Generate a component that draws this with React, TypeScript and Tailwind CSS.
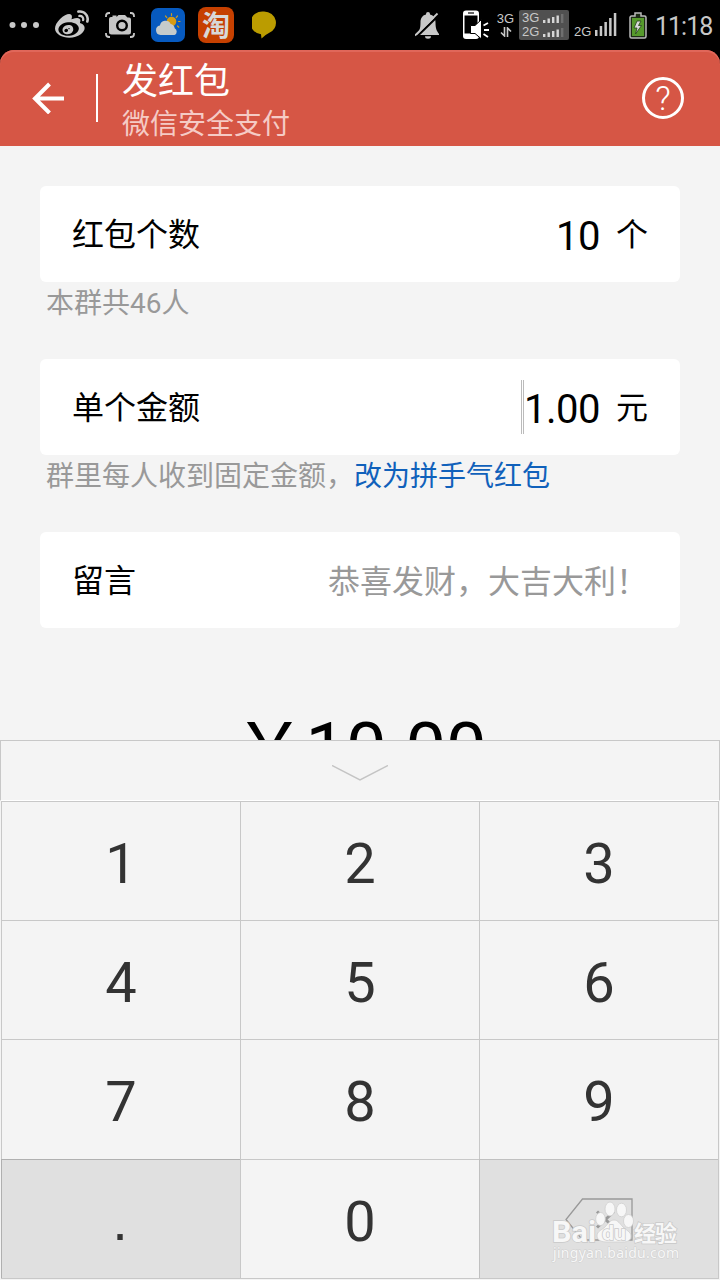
import { useState } from 'react'
import type { ReactNode } from 'react'
import { FaWeibo } from 'react-icons/fa'

interface FieldRowProps {
    label: string
    children: ReactNode
}

interface KeyProps {
    label: string
    onPress: (key: string) => void
}

const digitKeys = ['1', '2', '3', '4', '5', '6', '7', '8', '9']

function SignalBars() {
    return (
        <svg className="w-[21px] h-[9px]" viewBox="0 0 21 9" fill="#d6d6d6">
            <rect x="0" y="6" width="2.4" height="3" />
            <rect x="4.5" y="4.5" width="2.4" height="4.5" />
            <rect x="9" y="3" width="2.4" height="6" />
            <rect x="13.5" y="1.5" width="2.4" height="7.5" />
            <rect x="18" y="0" width="2.4" height="9" fill="#6f6f6f" />
        </svg>
    )
}

function CameraIcon() {
    return (
        <svg className="w-[30px] h-[26px]" viewBox="0 0 30 26" fill="none">
            <path d="M1 5V4a3 3 0 0 1 3-3h1M25 1h1a3 3 0 0 1 3 3v1M1 21v1a3 3 0 0 0 3 3h1M25 25h1a3 3 0 0 0 3-3v-1" stroke="#c6c6c6" strokeWidth="1.8" />
            <path d="M6 5h1.500V3.500h4V5l2-2h6.500l2.500 2.500H24a2 2 0 0 1 2 2V20a2.500 2.500 0 0 1-2.500 2.500h-17A2.500 2.500 0 0 1 4 20V7a2 2 0 0 1 2-2Z" fill="#c6c6c6" />
            <circle cx="17" cy="13.500" r="4.800" stroke="#000" strokeWidth="2.400" />
        </svg>
    )
}

function WeatherIcon() {
    return (
        <svg className="w-[34px] h-[34px]" viewBox="0 0 34 34">
            <rect width="34" height="34" rx="7" fill="#075abf" />
            <g stroke="#c99a22" strokeWidth="1.200" strokeLinecap="round">
                <path d="M20.500 5.500v2M14.500 8l1.300 1.600M26.500 8l-1.300 1.600M27.500 13.500h1.500M26.500 18l1.300 1.200" />
            </g>
            <circle cx="20.500" cy="13.500" r="4.800" fill="#d79b13" />
            <path d="M9.500 27a4.800 4.800 0 0 1-.6-9.500 5.700 5.700 0 0 1 10.800-1.500 5 5 0 0 1 4 4.300A3.700 3.700 0 0 1 23.500 27Z" fill="#c5cbcb" />
        </svg>
    )
}

function MutedBellIcon() {
    return (
        <svg className="w-6 h-[27px]" viewBox="0 0 24 27">
            <path d="M13 0a2 2 0 0 1 2 2v.5c4 1 5.500 4 5.500 8 0 6 1 8 3.500 11.500v1H1.500v-1c3-3 4-5.500 4-11.500 0-4 1.500-7 5.500-8V2a2 2 0 0 1 2-2Z" fill="#c8c8c8" />
            <path d="M10 24.300h6a3 2.500 0 0 1-6 0Z" fill="#c8c8c8" />
            <path d="M1.500 25 24 3" stroke="#000" strokeWidth="2.200" />
            <path d="M0 23.500 22.500 1.500" stroke="#c8c8c8" strokeWidth="1.800" />
        </svg>
    )
}

function PhoneSoundIcon() {
    return (
        <svg className="w-[28px] h-[30px]" viewBox="0 0 28 30">
            <rect x="1" y=".5" width="16" height="28.500" rx="3" fill="#fff" />
            <path d="M2.500 5.500h13v18h-13Z" fill="#000" />
            <path d="M6 3h6" stroke="#000" strokeWidth="1.200" />
            <path d="M8.500 15.500H13l6.500-6v19.500L13 23.500H8.500Z" fill="#fff" stroke="#000" strokeWidth="1" />
            <path d="m21.500 15.500 4.500-2.500M22 20h5M21.500 24l4.500 3" stroke="#fff" strokeWidth="1.800" />
        </svg>
    )
}

function BatteryIcon() {
    return (
        <svg className="w-[18px] h-[27px]" viewBox="0 0 18 27">
            <path d="M6 1h6v3h3.500A1.500 1.500 0 0 1 17 5.500v19a1.500 1.500 0 0 1-1.500 1.500h-13A1.500 1.500 0 0 1 1 24.500v-19A1.500 1.500 0 0 1 2.500 4H6Z" fill="#1d2b16" stroke="#b9b9b9" strokeWidth="1.500" />
            <path d="M3 6h12v18H3Z" fill="#569a2c" />
            <path d="m8 9-3 7h3l-1.500 6 6-8.500H9.500L12 9Z" fill="#d9d9d9" stroke="#24401a" strokeWidth=".8" />
        </svg>
    )
}

function StatusBar() {
    return (
        <div className="flex h-[50px] shrink-0 items-center bg-black text-[#c8c8c8]">
            <svg className="ml-[9px] w-[31px] h-2" viewBox="0 0 31 8" fill="#c8c8c8">
                <circle cx="3.500" cy="4" r="3" />
                <circle cx="15" cy="4" r="3" />
                <circle cx="27" cy="4" r="3" />
            </svg>
            <FaWeibo className="ml-[14px] w-[36px] h-[34px]" />
            <div className="ml-[15px]"><CameraIcon /></div>
            <div className="ml-4"><WeatherIcon /></div>
            <div className="ml-[13px] flex size-9 items-center justify-center rounded-[8px] bg-[#c64000] pt-[3px] text-[28px] leading-none font-bold text-[#d8d8d8]">
                淘
            </div>
            <svg className="ml-[18px] w-6 h-[28px]" viewBox="0 0 24 28">
                <path d="M12 .5a11.800 11.300 0 0 1 4.500 21.800Q13 24 9.500 27.500L9 23.300A11.800 11.300 0 0 1 12 .5Z" fill="#bb9c00" />
            </svg>

            <div className="ml-auto flex items-center">
                <MutedBellIcon />
                <div className="ml-[23px]"><PhoneSoundIcon /></div>
                <div className="ml-[6px] flex w-[19px] flex-col items-center font-['Liberation_Sans',sans-serif]">
                    <span className="text-[13px] leading-[12px]">3G</span>
                    <svg className="mt-[2px] w-[12px] h-[10px]" viewBox="0 0 12 10" fill="none" stroke="#c8c8c8" strokeWidth="1.600">
                        <path d="M4.500 0v9L1 5.500M7.500 10V1L11 4.500" />
                    </svg>
                </div>
                <div className="ml-[4px] flex h-[30px] w-[50px] flex-col justify-center gap-[2px] rounded-[2px] bg-[#505050] pl-[3px] font-['Liberation_Sans',sans-serif]">
                    <div className="flex items-center gap-[3px]">
                        <span className="w-[18px] text-[13px] leading-[12px]">3G</span>
                        <SignalBars />
                    </div>
                    <div className="flex items-center gap-[3px]">
                        <span className="w-[18px] text-[13px] leading-[12px]">2G</span>
                        <SignalBars />
                    </div>
                </div>
                <div className="ml-[5px] flex items-end font-['Liberation_Sans',sans-serif]">
                    <span className="w-[19px] text-[13px] leading-[11px]">2G</span>
                    <svg className="ml-[2px] w-[22px] h-6" viewBox="0 0 22 24" fill="#c8c8c8">
                        <rect x="0" y="17" width="2.500" height="6" />
                        <rect x="4.700" y="13" width="2.500" height="10" />
                        <rect x="9.400" y="9" width="2.500" height="14" />
                        <rect x="14.100" y="5" width="2.500" height="18" />
                        <rect x="18.800" y="0" width="2.500" height="23" />
                    </svg>
                </div>
                <div className="ml-3"><BatteryIcon /></div>
                <span className="ml-2 w-[65px] pt-[2px] text-[25px] leading-none tracking-[-1px]">11:18</span>
            </div>
        </div>
    )
}

function Header() {
    return (
        <div className="shrink-0 bg-black">
            <header className="flex h-24 items-center rounded-t-[14px] bg-[#d65645] text-white shadow-[inset_0_2px_0_#e0675a]">
                <svg className="ml-8 w-8 h-8" viewBox="0 0 32 32" fill="none" stroke="currentColor" strokeWidth="4">
                    <path d="M32 16.500H3M17.500 2 3 16.500l14.500 14.500" />
                </svg>
                <div className="ml-8 h-12 w-[2px] bg-white" />
                <div className="ml-6 flex flex-col pt-[9px]">
                    <h1 className="text-[36px] leading-[43px]">发红包</h1>
                    <p className="text-[28px] leading-[41px] text-[#f5cbc5]">微信安全支付</p>
                </div>
                <div className="mr-9 ml-auto flex size-[42px] items-center justify-center rounded-full border-[3px] border-white text-[34px] leading-none font-light">
                    ?
                </div>
            </header>
        </div>
    )
}

function FieldRow({ label, children }: FieldRowProps) {
    return (
        <div className="flex h-24 items-center justify-between rounded-md bg-white px-8 pt-[2px] text-[32px] text-black">
            <span>{label}</span>
            {children}
        </div>
    )
}

function Key({ label, onPress }: KeyProps) {
    return (
        <button
            type="button"
            onClick={() => onPress(label)}
            className="flex items-center justify-center border-t border-l border-[#c8c8c8] pt-[5px] text-[56px] leading-none text-[#333333]"
        >
            {label}
        </button>
    )
}

function Watermark() {
    return (
        <svg className="pointer-events-none absolute top-[38px] left-[70px] w-[132px] h-[68px]" viewBox="0 0 132 68" fill="#f7f7f7">
            <g stroke="#cfcfcf" strokeWidth=".8">
                <ellipse cx="60" cy="11" rx="5" ry="7" />
                <ellipse cx="71.500" cy="12" rx="5" ry="6.800" />
                <ellipse cx="50.500" cy="21" rx="4.800" ry="6.500" />
                <ellipse cx="78.500" cy="23" rx="5" ry="6.500" />
                <path d="M64 22c4 0 6 4 9 7s8 5 8 9-3 6-8 6H56c-6 0-9-3-9-6 0-5 5-6 8-9s5-7 9-7Z" />
            </g>
            <g stroke="#c9c9c9" strokeWidth="1.500" fontWeight="700" paintOrder="stroke">
                <text x="2" y="44" fontSize="29" textLength="44" lengthAdjust="spacingAndGlyphs">Bai</text>
                <text x="52" y="42" fontSize="21" textLength="24" lengthAdjust="spacingAndGlyphs">du</text>
                <text x="84" y="43" fontSize="22" textLength="43">经验</text>
            </g>
            <text x="3" y="60" fontSize="14" stroke="#cfcfcf" strokeWidth="1" paintOrder="stroke" textLength="126" fontFamily="Noto Sans, sans-serif">jingyan.baidu.com</text>
        </svg>
    )
}

export default function App() {
    const [amount, setAmount] = useState('1.00')
    const count = 10

    const handleKey = (key: string) => {
        setAmount(prev => prev + key)
    }

    const handleDelete = () => {
        setAmount(prev => prev.slice(0, -1))
    }

    const total = (Number(amount) * count || 0).toFixed(2)

    return (
        <div className="flex h-[1280px] w-[720px] flex-col overflow-hidden bg-[#f4f4f4] font-[Roboto,'Noto_Sans_CJK_SC',sans-serif]">
            <StatusBar />
            <Header />

            {/* Form */}
            <main className="h-[594px] shrink-0 overflow-hidden px-10 pt-10">
                <FieldRow label="红包个数">
                    <div className="flex items-center gap-4">
                        <span className="pt-1 text-[40px] leading-none tracking-[-0.5px]">{count}</span>
                        <span>个</span>
                    </div>
                </FieldRow>
                <p className="h-[77px] pt-[2px] pl-[6px] text-[28px] leading-[40px] text-[#999999]">本群共46人</p>

                <FieldRow label="单个金额">
                    <div className="flex items-center">
                        <div className="h-[54px] w-[3px] -translate-y-px border-x border-[#bbbbbb]" />
                        <span className="pt-1 text-[40px] leading-none tracking-[-0.5px]">{amount}</span>
                        <span className="ml-4">元</span>
                    </div>
                </FieldRow>
                <p className="h-[77px] pt-[2px] pl-[6px] text-[28px] leading-[40px] text-[#999999]">
                    群里每人收到固定金额，<a className="text-[#1061bb]">改为拼手气红包</a>
                </p>

                <FieldRow label="留言">
                    <span className="pt-px text-[#999999]">恭喜发财，大吉大利！</span>
                </FieldRow>

                <div className="mt-[80px] text-center text-[72px] leading-[84px] text-black">￥{total}</div>
            </main>

            {/* Numeric keypad */}
            <section className="flex flex-1 flex-col">
                <div className="flex h-[61px] items-center justify-center border border-b-white border-[#c8c8c8]">
                    <svg className="mt-1 w-[56px] h-4" viewBox="0 0 56 16" fill="none" stroke="#c4c4c4" strokeWidth="1.500">
                        <path d="m0 .5 28 14.500L56 .5" />
                    </svg>
                </div>
                <div className="mx-px grid h-[478px] grid-cols-3 grid-rows-[119px_119px_120px_119px] border-r border-b border-[#c8c8c8]">
                    {digitKeys.map(key => (
                        <Key key={key} label={key} onPress={handleKey} />
                    ))}
                    <button
                        type="button"
                        onClick={() => handleKey('.')}
                        className="flex items-center justify-center border-t border-l border-[#b0b0b0] bg-[#e0e0e0] pt-1 pr-[2px] font-['Liberation_Sans',sans-serif] text-[56px] leading-none text-[#333333]"
                    >
                        .
                    </button>
                    <Key label="0" onPress={handleKey} />
                    <button
                        type="button"
                        onClick={handleDelete}
                        className="relative flex items-center justify-center border-t border-l border-[#c0c0c0] bg-[#e0e0e0]"
                    >
                        <svg className="w-[68px] h-[43px]" viewBox="0 0 68 43" fill="none" stroke="#999999">
                            <path d="M17.500 1H67v41H17.500L1 21.500Z" strokeWidth="1.300" />
                            <path d="m32 13.500 17 16M49 13.500l-17 16" strokeWidth="3" />
                        </svg>
                        <Watermark />
                    </button>
                </div>
            </section>
        </div>
    )
}
